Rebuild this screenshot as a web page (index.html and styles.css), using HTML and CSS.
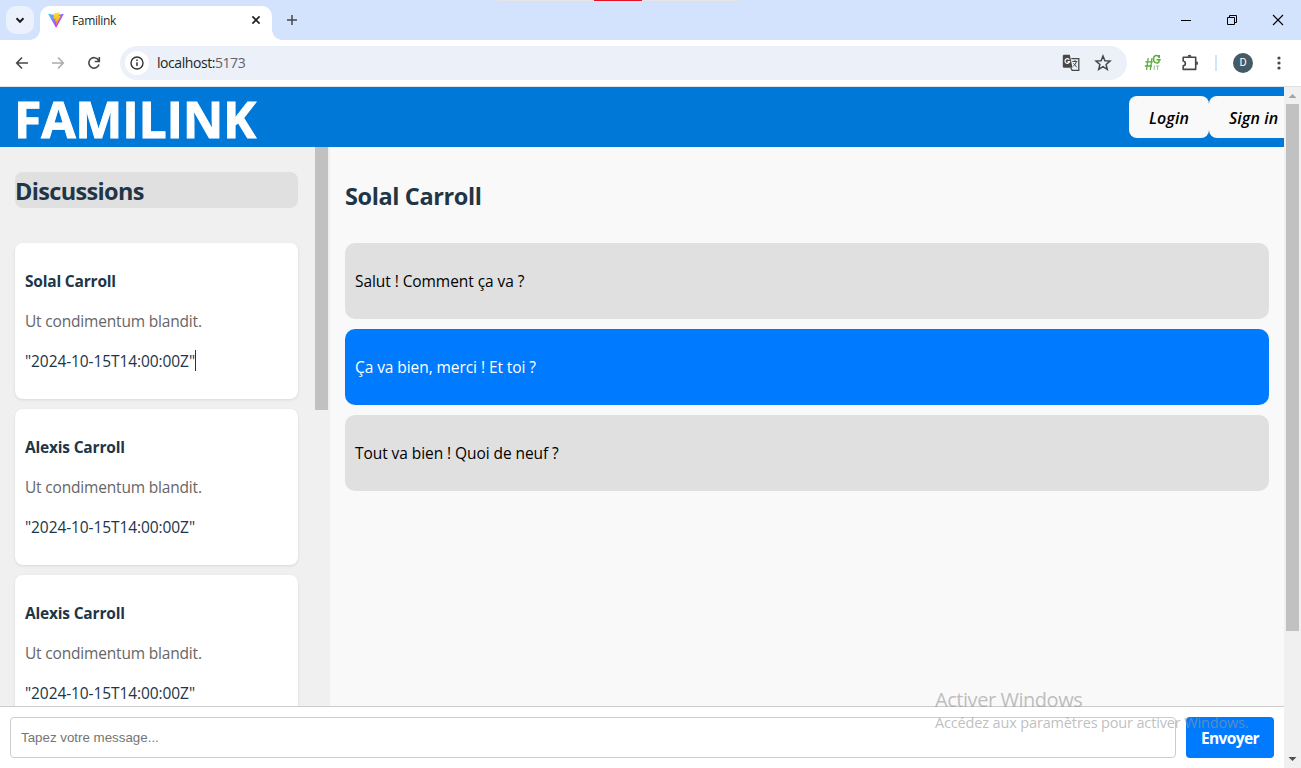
FILE: index.html
```html
<!DOCTYPE html>
<html lang="fr">
<head>
<meta charset="utf-8">
<title>Familink</title>
<link rel="stylesheet" href="styles.css">
</head>
<body>
<div class="browser">
  <div class="tabstrip">
    <div class="screen-edge"><span class="screen-edge-active"></span></div>
    <div class="tab-search"><svg width="28" height="28" viewBox="0 0 28 28"><path d="M10.5 12.3l3.5 3.5 3.5-3.5" fill="none" stroke="#1f1f1f" stroke-width="2"/></svg></div>
    <div class="tab">
      <svg class="favicon" width="16" height="16" viewBox="0 0 410 404"><defs><linearGradient id="a" x1="6" y1="33" x2="235" y2="344" gradientUnits="userSpaceOnUse"><stop stop-color="#41D1FF"/><stop offset="1" stop-color="#BD34FE"/></linearGradient><linearGradient id="b" x1="194" y1="9" x2="236" y2="293" gradientUnits="userSpaceOnUse"><stop stop-color="#FFEA83"/><stop offset=".08" stop-color="#FFDD35"/><stop offset="1" stop-color="#FFA800"/></linearGradient></defs><path d="M399.6 59.5L215.6 388.500c-3.800 6.800-13.500 6.800-17.300.1L10.600 59.600C6.400 52.200 12.700 43.300 21 44.800l184.200 32.900c1.200.2 2.400.2 3.500 0l180.400-32.900c8.300-1.500 14.700 7.400 10.500 14.700z" fill="url(#a)"/><path d="M293 1.600L156.800 28.200c-2.200.4-3.900 2.300-4 4.600l-8.400 141.500c-.2 3.300 2.900 5.900 6.100 5.200l37.900-8.800c3.600-.8 6.800 2.300 6 5.900l-11.200 55.200c-.8 3.700 2.700 6.900 6.400 5.800l23.400-7.100c3.600-1.100 7.100 2.100 6.400 5.800l-17.900 86.600c-1.100 5.400 6.100 8.400 9.100 3.700l2-3.100 111-221.500c1.900-3.700-1.300-7.900-5.400-7.100l-39 7.500c-3.700.7-6.800-2.700-5.800-6.300l25.500-88.300c1-3.600-2.100-7.100-5.900-6.300z" fill="url(#b)"/></svg>
      <span class="tab-title">Familink</span>
      <svg width="16" height="16" viewBox="0 0 16 16"><path d="M4.400 4.400l7.200 7.200M11.600 4.400l-7.200 7.200" stroke="#1f1f1f" stroke-width="1.600"/></svg>
    </div>
    <svg class="new-tab" width="16" height="16" viewBox="0 0 16 16"><path d="M8 3v10M3 8h10" stroke="#474747" stroke-width="1.500"/></svg>
    <div class="window-buttons">
      <svg width="46" height="40" viewBox="0 0 46 40"><path d="M18 20.500h10" stroke="#000"/></svg>
      <svg width="46" height="40" viewBox="0 0 46 40"><path d="M18.500 17.500h7v7h-7zM20.500 17.500v-2h7v7h-2" fill="none" stroke="#000"/></svg>
      <svg width="46" height="40" viewBox="0 0 46 40"><path d="M18 15l10 10M28 15l-10 10" stroke="#000" stroke-width="1.100"/></svg>
    </div>
  </div>
  <div class="toolbar">
    <svg class="nav-icon" width="16" height="16" viewBox="0 0 16 16"><path d="M14 8H3M8 2.500L2.700 8 8 13.500" fill="none" stroke="#474747" stroke-width="1.600"/></svg>
    <svg class="nav-icon" width="16" height="16" viewBox="0 0 16 16"><path d="M2 8h11M8 2.500L13.300 8 8 13.500" fill="none" stroke="#acacac" stroke-width="1.600"/></svg>
    <svg class="nav-icon" width="16" height="16" viewBox="0 0 16 16"><path d="M13 9.500A5.200 5.200 0 1 1 12.400 5L13 6M13.300 2v4.500H8.800" fill="none" stroke="#474747" stroke-width="1.600"/></svg>
    <div class="omnibox">
      <span class="site-info"><svg width="16" height="16" viewBox="0 0 16 16"><circle cx="8" cy="8" r="6" fill="none" stroke="#333" stroke-width="1.400"/><path d="M8 7.300v3.800M8 4.600v1.500" stroke="#333" stroke-width="1.500"/></svg></span>
      <span class="url">localhost:<span class="port">5173</span></span>
      <svg class="translate" width="18" height="18" viewBox="0 0 18 18"><path d="M1.600 0.800h6.200l2.700 13H2a1.200 1.200 0 0 1-1.200-1.200V1.800z" fill="#474747"/><path d="M7.300 5.800A2.300 2.300 0 1 0 7.500 7.700H5.600" fill="none" stroke="#fff" stroke-width="1.200"/><path d="M9.300 4.700h7.500v11.600H10.200L8.800 14" fill="none" stroke="#474747" stroke-width="1.300"/><path d="M10.300 7.500h5M13 6v1.500M14.500 7.500c-.5 2-2 3.700-3.200 4.500M11.500 9.200l3.200 4" fill="none" stroke="#474747"/></svg>
      <svg width="18" height="18" viewBox="0 0 18 18"><path d="M9 2l1.900 4.700 5.100.4-3.900 3.300 1.200 5L9 12.700l-4.300 2.700 1.200-5L2 7.100l5.100-.4z" fill="none" stroke="#474747" stroke-width="1.500"/></svg>
    </div>
    <svg class="ext-hash" width="18" height="18" viewBox="0 0 18 18"><path d="M4.200 4L2.500 16M8 4L6.300 16M1.300 7.800h7.500M.8 12h7.200" stroke="#5eaa3a" stroke-width="1.300"/><path d="M15.300 4C14.500.3 9.500.5 9.500 5c0 4 4 4.800 5.500 3V5.700h-2.500M15.300 1v3M14 5.700h2.800" fill="none" stroke="#5eaa3a" stroke-width="1.500"/><path d="M10.300 11.500V16M11.800 12h3.500M13.500 12v4" stroke="#93c77a" stroke-width="1"/></svg>
    <svg class="ext-puzzle" width="20" height="20" viewBox="0 0 20 20"><path d="M3.200 8V4.200H15.700V16.400H3.200V12.900c2.900-.5 2.900-4.400 0-4.900z" fill="none" stroke="#474747" stroke-width="1.600" stroke-linejoin="round"/><path d="M7.500 3.700a2 2 0 0 1 4 0zM16.200 8.300a1.900 1.900 0 0 1 0 3.800z" fill="#474747"/></svg>
    <span class="divider"></span>
    <span class="avatar">D</span>
    <svg class="menu" width="16" height="16" viewBox="0 0 16 16"><g fill="#474747"><circle cx="8" cy="3" r="1.600"/><circle cx="8" cy="8" r="1.600"/><circle cx="8" cy="13" r="1.600"/></g></svg>
  </div>
  <div class="viewport">
    <div class="app">
      <header class="app-header">
        <h1 class="brand">FAMILINK</h1>
        <nav class="auth"><button class="auth-button">Login</button><button class="auth-button">Sign in</button></nav>
      </header>
      <main class="app-main">
        <aside class="sidebar">
          <div class="discussions">
            <h2 class="discussions-title">Discussions</h2>
            <article class="card"><p class="name">Solal Carroll</p><p class="excerpt">Ut condimentum blandit.</p><p class="date">"2024-10-15T14:00:00Z"<span class="caret"></span></p></article>
            <article class="card"><p class="name">Alexis Carroll</p><p class="excerpt">Ut condimentum blandit.</p><p class="date">"2024-10-15T14:00:00Z"</p></article>
            <article class="card"><p class="name">Alexis Carroll</p><p class="excerpt">Ut condimentum blandit.</p><p class="date">"2024-10-15T14:00:00Z"</p></article>
          </div>
          <div class="side-scroll"><span class="side-thumb"></span></div>
        </aside>
        <section class="chat">
          <h2 class="chat-title">Solal Carroll</h2>
          <div class="message">Salut ! Comment ça va ?</div>
          <div class="message mine">Ça va bien, merci ! Et toi ?</div>
          <div class="message">Tout va bien ! Quoi de neuf ?</div>
        </section>
      </main>
      <footer class="composer">
        <input class="composer-input" type="text" placeholder="Tapez votre message...">
        <button class="send">Envoyer</button>
      </footer>
    </div>
    <div class="page-scroll">
      <svg width="17" height="17" viewBox="0 0 17 17"><path d="M4.500 11h8l-4-4z" fill="#a3a3a3"/></svg>
      <span class="page-thumb"></span>
      <svg width="17" height="17" viewBox="0 0 17 17"><path d="M4.500 6h8l-4 4z" fill="#505050"/></svg>
    </div>
  </div>
  <div class="watermark"><div class="watermark-title">Activer Windows</div><div class="watermark-text">Accédez aux paramètres pour activer Windows.</div></div>
</div>
</body>
</html>
```
FILE: styles.css
```css
* { box-sizing: border-box; }
body { margin: 0; font-family: "Open Sans", "Noto Sans", sans-serif; font-size: 15.5px; color: #213547; }
svg { display: block; flex: none; }
h1, h2, p { margin: 0; white-space: nowrap; }
button { border: 0; font-family: inherit; white-space: nowrap; }
.browser { position: relative; width: 1301px; height: 768px; overflow: hidden; display: flex; flex-direction: column; background: #fff; }

.tabstrip { position: relative; flex: none; height: 40px; background: #d3e3fd; display: flex; align-items: center; padding-left: 6px; }
.screen-edge { position: absolute; top: 0; left: 498px; width: 241px; height: 1px; background: #e5e5e5; display: flex; padding-left: 96px; }
.screen-edge-active { width: 48px; background: #e81123; }
.tab-search { width: 28px; height: 28px; border-radius: 10px; background: #ebf1fd; }
.tab { position: relative; align-self: flex-end; width: 232px; height: 34px; margin-left: 6px; padding: 0 8px 6px; border-radius: 10px 10px 0 0; background: #fff; display: flex; align-items: center; }
.tab::before, .tab::after { content: ""; position: absolute; bottom: 0; width: 10px; height: 10px; }
.tab::before { left: -10px; background: radial-gradient(circle at 0 0, transparent 9.500px, #fff 10px); }
.tab::after { right: -10px; background: radial-gradient(circle at 100% 0, transparent 9.500px, #fff 10px); }
.tab-title { flex: 1; margin-left: 8px; padding-top: 1px; font-size: 12px; letter-spacing: -0.36px; color: #1f1f1f; }
.new-tab { margin-left: 12px; }
.window-buttons { margin-left: auto; display: flex; }

.toolbar { flex: none; height: 47px; border-bottom: 1px solid #dfe1e5; display: flex; align-items: center; padding-left: 14px; }
.nav-icon { margin-right: 20px; }
.omnibox { width: 1007px; height: 34px; margin-left: -2px; margin-right: 17px; border-radius: 17px; background: #ebf0f9; display: flex; align-items: center; padding: 0 15px 0 5px; }
.site-info { width: 24px; height: 24px; border-radius: 50%; background: #fff; display: flex; align-items: center; justify-content: center; }
.url { flex: 1; margin-left: 8px; padding-bottom: 1px; font-size: 14px; letter-spacing: -0.44px; color: #1f1f1f; }
.port { color: #5f6368; }
.translate { margin-right: 14px; }
.ext-puzzle { margin-left: 18px; }
.divider { width: 2px; height: 16px; margin-left: 15px; background: #d3e3fd; }
.avatar { width: 20px; height: 20px; margin-left: 16px; border-radius: 50%; background: #455a64; color: #fff; font: 11px/20px Roboto, sans-serif; text-align: center; }
.menu { margin-left: 18px; }

.viewport { flex: 1; min-height: 0; display: flex; }
.app { width: 1284px; display: flex; flex-direction: column; overflow: hidden; }
.app-header { height: 60px; flex: none; background: #0078d7; display: flex; justify-content: space-between; padding: 0 0 0 14px; }
.brand { color: #fff; font-size: 50px; line-height: 64px; font-weight: 700; letter-spacing: -0.3px; -webkit-text-stroke: 0.9px #fff; }
.auth { width: 155px; display: flex; padding-top: 9px; }
.auth-button { flex: none; width: 80px; height: 42px; padding: 2px 0 0 20px; text-align: left; border-radius: 8px; background: #f9f9f9; color: #000; font-size: 16px; line-height: 20px; font-weight: 600; font-style: italic; letter-spacing: 0.1px; }
.auth-button:last-child { width: 90px; }
.app-main { flex: 1; min-height: 0; display: flex; overflow: hidden; }
.sidebar { width: 330px; flex: none; background: #f0f0f0; display: flex; }
.discussions { width: 313px; padding: 25px 15px 0; overflow: hidden; }
.discussions-title { height: 36px; margin-bottom: 35px; border-radius: 8px; background: #e0e0e0; font-size: 23.5px; line-height: 38px; font-weight: 700; letter-spacing: -0.65px; }
.card { height: 156px; margin-bottom: 10px; padding: 26px 10px; border-radius: 8px; background: #fff; box-shadow: 0 1px 3px rgba(0, 0, 0, .1); display: flex; flex-direction: column; gap: 16px; line-height: 24px; }
.name { font-weight: 700; letter-spacing: -0.19px; }
.excerpt { color: #666; letter-spacing: -0.18px; }
.date { display: flex; letter-spacing: -0.09px; }
.caret { width: 1px; height: 21px; margin-top: 1px; background: #213547; }
.side-scroll { width: 17px; padding: 0 2px; }
.side-thumb { display: block; height: 263px; background: #c1c1c1; }
.chat { flex: 1; padding: 30px 15px 0; background: #f9f9f9; }
.chat-title { height: 36px; margin-bottom: 30px; font-size: 23.5px; line-height: 38px; font-weight: 700; letter-spacing: -0.38px; }
.message { height: 76px; margin-bottom: 10px; padding: 26px 10px; border-radius: 10px; background: #e0e0e0; color: #000; line-height: 24px; letter-spacing: -0.07px; white-space: nowrap; }
.mine { background: #007bff; color: #fff; }
.composer { height: 62px; flex: none; border-top: 1px solid #ccc; padding: 10px; display: flex; gap: 10px; background: #fff; }
.composer-input { flex: 1; height: 41px; padding: 0 10px; border: 1px solid #ccc; border-radius: 4px; font: 13.333px "Liberation Sans", Arial, sans-serif; }
.composer-input::placeholder { color: #757575; }
.send { width: 88px; height: 41px; padding: 1px 0 0; border-radius: 4px; background: #007bff; color: #fff; font-size: 15.5px; font-weight: 700; letter-spacing: -0.6px; }
.page-scroll { width: 17px; background: #f0f0f0; display: flex; flex-direction: column; }
.page-thumb { width: 13px; height: 527px; margin: 0 2px auto; background: #c1c1c1; }
.watermark { position: absolute; left: 935px; top: 686px; color: rgba(150, 150, 150, .62); white-space: nowrap; }
.watermark-title { font-size: 20px; line-height: 28px; letter-spacing: -0.45px; }
.watermark-text { font-size: 14.500px; line-height: 18px; letter-spacing: -0.15px; }
```
